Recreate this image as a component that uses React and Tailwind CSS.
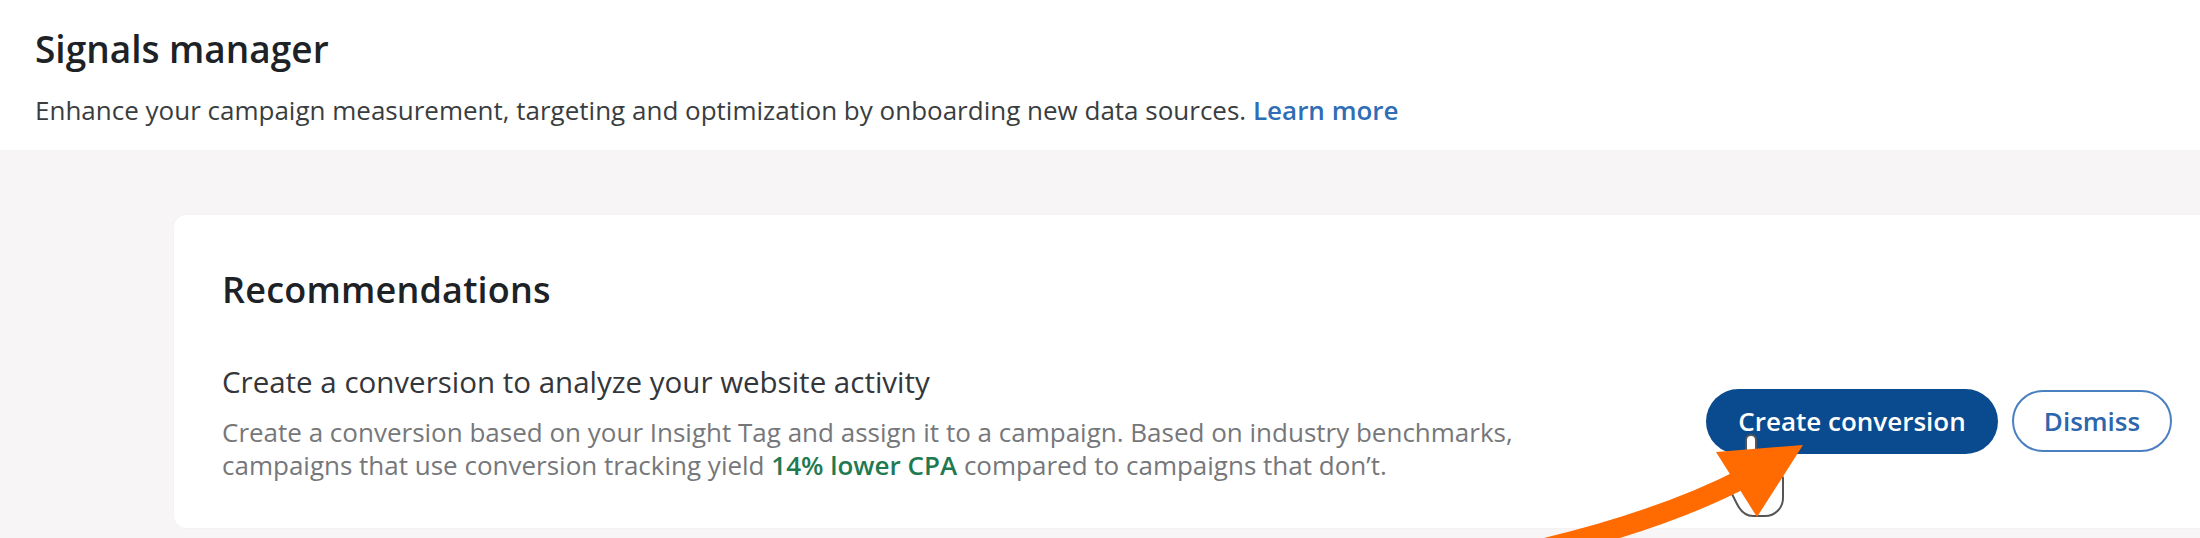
export default function App() {
  return (
    <div
      className="relative w-[2200px] h-[538px] overflow-hidden bg-[#f7f5f5]"
      style={{ fontFamily: '"Open Sans", "Noto Sans", sans-serif' }}
    >
      {/* page header */}
      <header className="bg-white h-[150px] px-[35px] pt-[27px]">
        <h1 className="text-[37px] leading-[44px] font-semibold text-[#1d2226]">
          Signals manager
        </h1>
        <p className="mt-[22px] text-[26px] leading-[34px] text-[#3a3d40]">
          Enhance your campaign measurement, targeting and optimization by onboarding new data sources.{" "}
          <a href="#" className="font-semibold text-[#2f6db5]">
            Learn more
          </a>
        </p>
      </header>

      {/* recommendations card */}
      <div className="pl-[174px] pt-[65px]">
        <section className="bg-white rounded-l-[12px] h-[313px] pl-[48px] pr-[28px] pt-[53px] shadow-[0_0_2px_rgba(0,0,0,0.06)]">
          <h2 className="text-[36px] leading-[44px] font-semibold text-[#1d2226] tracking-[0.2px]">
            Recommendations
          </h2>
          <div className="mt-[51px] flex items-center justify-between">
            <div>
              <h3 className="text-[29.5px] leading-[38px] text-[#33363a]">
                Create a conversion to analyze your website activity
              </h3>
              <p className="mt-[15px] text-[26px] leading-[33px] text-[#76777a]">
                Create a conversion based on your Insight Tag and assign it to a campaign. Based on industry benchmarks,
                <br />
                campaigns that use conversion tracking yield{" "}
                <span className="font-semibold text-[#1f7a52]">14% lower CPA</span> compared to campaigns that
                don’t.
              </p>
            </div>
            <div className="flex items-center gap-[14px] -mt-[3px]">
              <button className="h-[65px] w-[292px] rounded-full bg-[#0a4a8e] text-white text-[26px] font-semibold">
                Create conversion
              </button>
              <button className="h-[62px] w-[160px] rounded-full border-2 border-[#4a7fc0] text-[#2c66ad] text-[26px] font-semibold">
                Dismiss
              </button>
            </div>
          </div>
        </section>
      </div>

      {/* cursor + annotation arrow overlay */}
      <svg
        className="absolute inset-0 pointer-events-none"
        width="2200"
        height="538"
        viewBox="0 0 2200 538"
      >
        <path
          d="M1746 440 a5 5 0 0 1 10 0 v28 c8 -2 14 0 16 4 c6 -1 10 2 11 6 v20 c0 10 -8 18 -18 18 h-12 c-8 0 -13 -6 -16 -12 l-8 -16 c-2 -5 2 -9 7 -6 l10 8 z"
          fill="#ffffff"
          stroke="#555"
          strokeWidth="2"
          strokeLinejoin="round"
        />
        <path d="M1528 552 Q1660 522 1748 476" fill="none" stroke="#ff6b00" strokeWidth="20" />
        <polygon points="1716,452 1803,445 1757,517" fill="#ff6b00" />
      </svg>
    </div>
  );
}
